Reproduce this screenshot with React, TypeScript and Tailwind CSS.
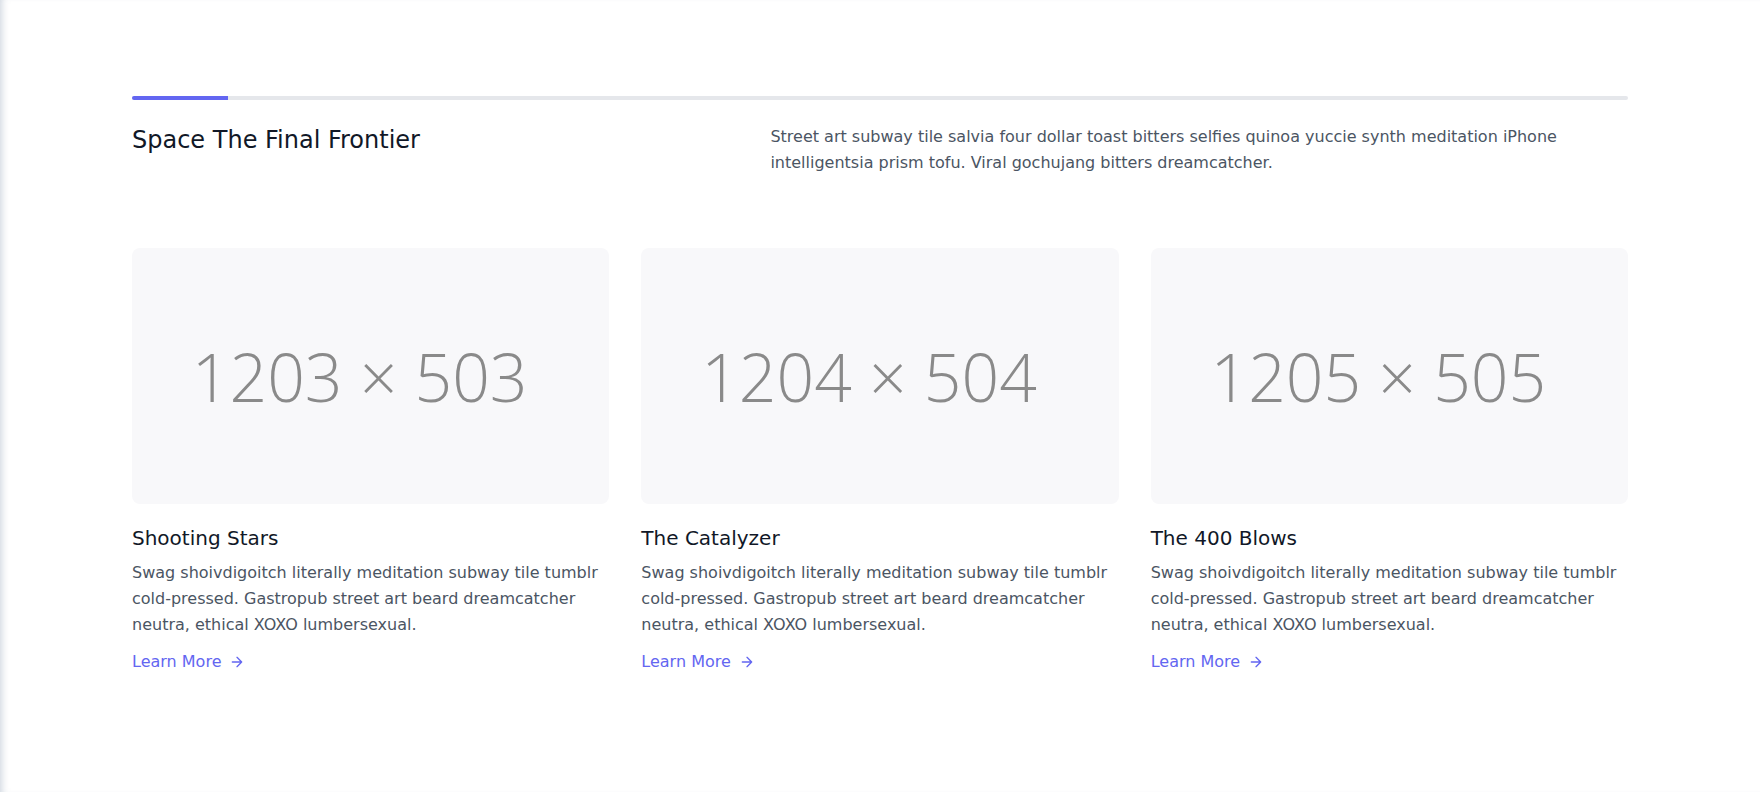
const cards = [
  { title: "Shooting Stars", w: 1203, h: 503 },
  { title: "The Catalyzer", w: 1204, h: 504 },
  { title: "The 400 Blows", w: 1205, h: 505 },
];

function Placeholder({ w, h }: { w: number; h: number }) {
  return (
    <div className="h-64 rounded-lg overflow-hidden bg-[#f8f8fa] flex items-center justify-center pr-[22px]">
      <span
        className="text-[66px] font-light leading-none text-[#8a8a8a] whitespace-nowrap"
        style={{ fontFamily: '"Open Sans", sans-serif' }}
      >
        {w} × {h}
      </span>
    </div>
  );
}

export default function App() {
  return (
    <div
      className="min-h-screen bg-white shadow-[inset_7px_0_7px_-5px_rgba(148,163,184,0.45)]"
      style={{ fontFamily: '"DejaVu Sans", sans-serif' }}
    >
      <section className="text-[#4b5563]">
        <div className="max-w-[1536px] px-5 py-24 mx-auto">
          <div className="flex flex-col">
            {/* progress bar */}
            <div className="h-1 bg-[#e5e7eb] rounded overflow-hidden">
              <div className="w-24 h-full bg-[#6366f1]"></div>
            </div>
            <div className="flex flex-row py-6 mb-12">
              <h1 className="w-2/5 text-[#111827] font-medium text-2xl leading-8">
                Space The Final Frontier
              </h1>
              <p className="w-3/5 leading-relaxed text-base pl-10">
                Street art subway tile salvia four dollar toast bitters selfies quinoa yuccie synth
                meditation iPhone intelligentsia prism tofu. Viral gochujang bitters dreamcatcher.
              </p>
            </div>
          </div>

          <div className="flex -m-4 -mb-10">
            {cards.map((c) => (
              <div key={c.title} className="p-4 w-1/3">
                <Placeholder w={c.w} h={c.h} />
                <h2 className="text-xl leading-7 font-medium text-[#111827] mt-5">{c.title}</h2>
                <p className="text-base leading-relaxed mt-2">
                  Swag shoivdigoitch literally meditation subway tile tumblr cold-pressed. Gastropub
                  street art beard dreamcatcher neutra, ethical XOXO lumbersexual.
                </p>
                <a className="text-[#6366f1] inline-flex items-center mt-3 leading-6">
                  Learn More
                  <svg
                    fill="none"
                    stroke="currentColor"
                    strokeLinecap="round"
                    strokeLinejoin="round"
                    strokeWidth="2"
                    className="w-4 h-4 ml-2"
                    viewBox="0 0 24 24"
                  >
                    <path d="M5 12h14M12 5l7 7-7 7"></path>
                  </svg>
                </a>
              </div>
            ))}
          </div>
        </div>
      </section>
    </div>
  );
}
